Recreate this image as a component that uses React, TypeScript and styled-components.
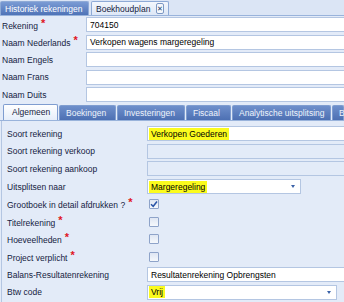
import styled, { createGlobalStyle } from "styled-components";

const GlobalStyle = createGlobalStyle`
  html, body {
    margin: 0;
    padding: 0;
    background: #dfe8f6;
  }
  body {
    font-family: "Liberation Sans", Arial, sans-serif;
    font-size: 8.5px;
    color: #10204a;
    width: 344px;
    height: 302px;
    overflow: hidden;
  }
`;

const Page = styled.div`
  width: 344px;
  height: 302px;
  overflow: hidden;
  display: flex;
  flex-direction: column;
  background: #e3ebf8;
  & > * {
    flex-shrink: 0;
  }
`;

const TopBar = styled.div`
  display: flex;
  align-items: flex-end;
  height: 15px;
  gap: 2px;
  background: #dbe5f5;
  border-bottom: 1px solid #99b3db;
`;

const TopTab = styled.div<{ $active?: boolean; $w: number }>`
  flex: none;
  width: ${(p) => p.$w}px;
  height: 14px;
  display: flex;
  align-items: center;
  gap: 6px;
  padding: 0 4px;
  box-sizing: border-box;
  white-space: nowrap;
  border: 1px solid #8eaad6;
  border-bottom: none;
  border-radius: 2px 2px 0 0;
  color: ${(p) => (p.$active ? "#fff" : "#15223f")};
  background: ${(p) =>
    p.$active
      ? "linear-gradient(#7a9bd4, #4f73b7)"
      : "linear-gradient(#f3f7fd, #dde7f6)"};
`;

const CloseBox = styled.span`
  width: 10px;
  height: 9px;
  border: 1px solid #7d98c4;
  border-radius: 2px;
  background: #f4f7fc;
  display: flex;
  align-items: center;
  justify-content: center;
  font-size: 7px;
  line-height: 1;
  color: #233a66;
`;

const HeaderForm = styled.div`
  display: flex;
  flex-direction: column;
  padding-left: 2px;
`;

const Row = styled.div<{ $labelWidth: number; $h: number }>`
  display: grid;
  grid-template-columns: ${(p) => p.$labelWidth}px 1fr;
  align-items: center;
  height: ${(p) => p.$h}px;
  flex-shrink: 0;
`;

const Label = styled.div`
  white-space: nowrap;
  color: #15223f;
`;

const Star = styled.span`
  color: #e0141e;
  font-weight: bold;
  font-size: 11px;
  margin-left: 3px;
  position: relative;
  top: -2px;
`;

const Field = styled.div<{ $width?: number; $disabled?: boolean }>`
  height: 15px;
  box-sizing: border-box;
  width: ${(p) => (p.$width ? `${p.$width}px` : "auto")};
  border: 1px solid #b4c6e2;
  border-right: ${(p) => (p.$width ? "1px solid #b4c6e2" : "none")};
  background: ${(p) => (p.$disabled ? "#e3ebf8" : "#fff")};
  display: flex;
  align-items: center;
  padding-left: 1px;
  color: #000;
  white-space: nowrap;
  position: relative;
`;

const Mark = styled.span`
  background: #fbfb1e;
  padding: 1px 2px;
`;

const Plain = styled.span`
  padding-left: 2px;
`;

const Arrow = styled.span`
  position: absolute;
  right: 5px;
  top: 5px;
  width: 0;
  height: 0;
  border-left: 2.5px solid transparent;
  border-right: 2.5px solid transparent;
  border-top: 3px solid #3b62a8;
`;

const SubTabs = styled.div`
  display: flex;
  align-items: flex-end;
  gap: 1px;
  height: 16px;
  padding-left: 3px;
  border-bottom: 1px solid #99b3db;
`;

const SubTab = styled.div<{ $active?: boolean; $w: number }>`
  flex: none;
  width: ${(p) => p.$w}px;
  height: ${(p) => (p.$active ? 16 : 15)}px;
  box-sizing: border-box;
  padding-left: ${(p) => (p.$active ? 8 : 6)}px;
  display: flex;
  align-items: center;
  white-space: nowrap;
  border: 1px solid #7f9dd0;
  border-bottom: none;
  border-radius: 2px 2px 0 0;
  color: ${(p) => (p.$active ? "#15223f" : "#eef3fb")};
  background: ${(p) =>
    p.$active
      ? "linear-gradient(#ffffff, #e6eefa)"
      : "linear-gradient(#6e8fcb, #4d70b3)"};
`;

const PanelBody = styled.div`
  display: flex;
  flex-direction: column;
  padding: 4.5px 0 0 5px;
  border-left: 1px solid #b4c6e2;
  margin-left: 1px;
  flex: 1;
`;

const Check = styled.div`
  width: 10px;
  height: 10px;
  margin-left: 2px;
  box-sizing: border-box;
  border: 1px solid #8ea3c9;
  border-radius: 1px;
  background: linear-gradient(#dfe6f3, #f5f8fc);
  display: flex;
  align-items: center;
  justify-content: center;
  svg {
    width: 8px;
    height: 8px;
  }
`;

const headerRows = [
  { label: "Rekening", star: true, value: "704150" },
  { label: "Naam Nederlands", star: true, value: "Verkopen wagens margeregeling" },
  { label: "Naam Engels" },
  { label: "Naam Frans" },
  { label: "Naam Duits" },
];

const tabs = [
  { label: "Algemeen", w: 55, active: true },
  { label: "Boekingen", w: 57 },
  { label: "Investeringen", w: 68 },
  { label: "Fiscaal", w: 45 },
  { label: "Analytische uitsplitsing", w: 99 },
  { label: "B", w: 12 },
];

function CheckMark() {
  return (
    <svg viewBox="0 0 8 8">
      <path d="M1 4.2 L3.2 6.3 L7 1.5" fill="none" stroke="#2a55a8" strokeWidth={1.5} />
    </svg>
  );
}

const ROW = 17.6;

export default function App() {
  return (
    <Page>
      <GlobalStyle />
      <TopBar>
        <TopTab $active $w={89}>Historiek rekeningen</TopTab>
        <TopTab $w={78}>
          Boekhoudplan
          <CloseBox>✕</CloseBox>
        </TopTab>
      </TopBar>
      <HeaderForm>
        {headerRows.map((r) => (
          <Row key={r.label} $labelWidth={84} $h={17.5}>
            <Label>
              {r.label}
              {r.star && <Star>*</Star>}
            </Label>
            <Field>{r.value && <Plain>{r.value}</Plain>}</Field>
          </Row>
        ))}
      </HeaderForm>
      <SubTabs>
        {tabs.map((t) => (
          <SubTab key={t.label} $active={t.active} $w={t.w}>
            {t.label}
          </SubTab>
        ))}
      </SubTabs>
      <PanelBody>
        <Row $labelWidth={140} $h={ROW}>
          <Label>Soort rekening</Label>
          <Field>
            <Mark>Verkopen Goederen</Mark>
          </Field>
        </Row>
        <Row $labelWidth={140} $h={ROW}>
          <Label>Soort rekening verkoop</Label>
          <Field $disabled />
        </Row>
        <Row $labelWidth={140} $h={ROW}>
          <Label>Soort rekening aankoop</Label>
          <Field $disabled />
        </Row>
        <Row $labelWidth={140} $h={ROW}>
          <Label>Uitsplitsen naar</Label>
          <Field $width={154}>
            <Mark>Margeregeling</Mark>
            <Arrow />
          </Field>
        </Row>
        <Row $labelWidth={140} $h={ROW}>
          <Label>
            Grootboek in detail afdrukken ?<Star>*</Star>
          </Label>
          <Check>
            <CheckMark />
          </Check>
        </Row>
        <Row $labelWidth={140} $h={ROW}>
          <Label>
            Titelrekening<Star>*</Star>
          </Label>
          <Check />
        </Row>
        <Row $labelWidth={140} $h={ROW}>
          <Label>
            Hoeveelheden<Star>*</Star>
          </Label>
          <Check />
        </Row>
        <Row $labelWidth={140} $h={ROW}>
          <Label>
            Project verplicht<Star>*</Star>
          </Label>
          <Check />
        </Row>
        <Row $labelWidth={140} $h={ROW}>
          <Label>Balans-Resultatenrekening</Label>
          <Field>
            <Plain>Resultatenrekening Opbrengsten</Plain>
          </Field>
        </Row>
        <Row $labelWidth={140} $h={ROW}>
          <Label>Btw code</Label>
          <Field $width={190}>
            <Mark>Vrij</Mark>
            <Arrow />
          </Field>
        </Row>
      </PanelBody>
    </Page>
  );
}
